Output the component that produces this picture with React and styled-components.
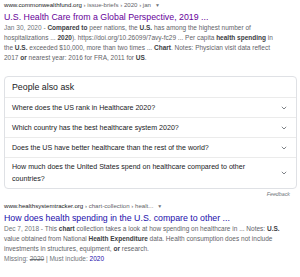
import React from 'react';
import styled, { createGlobalStyle } from 'styled-components';

// Estilo global da página
const GlobalStyle = createGlobalStyle`
    body {
        margin: 0;
        background: #ffffff;
        font-family: 'Liberation Sans', Arial, sans-serif;
    }
`;

const Page = styled.div`
    display: flex;
    flex-direction: column;
    width: 300px;
    padding: 0 3px 0 4px;
    box-sizing: border-box;
`;

const Result = styled.div`
    display: flex;
    flex-direction: column;
    margin-top: ${(props) => props.$top || 0}px;
`;

const Cite = styled.div`
    font-size: 6.1px;
    line-height: 9px;
    color: #202124;
    white-space: nowrap;
`;

const Crumbs = styled.span`
    color: #5f6368;
`;

const Caret = styled.span`
    display: inline-block;
    margin-left: 4px;
    font-size: 5px;
    color: #70757a;
`;

const Title = styled.a`
    margin-top: 1px;
    font-size: 8.8px;
    line-height: 12px;
    color: ${(props) => (props.$visited ? '#660099' : '#1a0dab')};
    text-decoration: none;
    white-space: nowrap;
`;

const Snippet = styled.div`
    display: flex;
    flex-direction: column;
    font-size: 6.5px;
    color: #5f6368;

    b {
        color: #3c4043;
    }
`;

// Uma linha do resumo, com as quebras da captura
const Line = styled.div`
    height: 10px;
    line-height: 10px;
    white-space: nowrap;
`;

const Date = styled.span`
    color: #70757a;
`;

const Struck = styled.s`
    color: #70757a;
`;

const Link = styled.span`
    color: #1a0dab;
`;

// Caixa "People also ask"
const PaaBox = styled.div`
    display: flex;
    flex-direction: column;
    margin-top: 13px;
    border: 1px solid #dfe1e5;
    border-radius: 4px;
`;

const PaaHeader = styled.div`
    height: 20px;
    padding-left: 7px;
    display: flex;
    align-items: center;
    font-size: 8.8px;
    color: #202124;
`;

const PaaRow = styled.div`
    display: flex;
    align-items: center;
    justify-content: space-between;
    min-height: 19px;
    padding: 0 9px 0 7px;
    border-top: 1px solid #ebebeb;
`;

const Question = styled.div`
    flex: 1;
    padding: ${(props) => (props.$wrap ? '3px 22px 3px 0' : '0 22px 0 0')};
    font-size: 7.1px;
    line-height: 12px;
    color: #202124;
`;

const Chevron = () => (
    <svg width="6" height="4" viewBox="0 0 6 4">
        <path d="M0.8 0.8 L3 3 L5.2 0.8" fill="none" stroke="#70757a" strokeWidth="0.9" />
    </svg>
);

const Feedback = styled.div`
    align-self: flex-end;
    margin-right: 7px;
    font-size: 5.3px;
    line-height: 10px;
    font-style: italic;
    color: #70757a;
`;

const questions = [
    'Where does the US rank in Healthcare 2020?',
    'Which country has the best healthcare system 2020?',
    'Does the US have better healthcare than the rest of the world?',
];

const App = () => {
    return (
        <Page>
            <GlobalStyle />
            <Result>
                <Cite>
                    www.commonwealthfund.org<Crumbs> › issue-briefs › 2020 › jan</Crumbs>
                    <Caret>▼</Caret>
                </Cite>
                <Title $visited href="#">U.S. Health Care from a Global Perspective, 2019 ...</Title>
                <Snippet>
                    <Line>
                        <Date>Jan 30, 2020 - </Date>
                        <b>Compared to</b> peer nations, the <b>U.S.</b> has among the highest number of
                    </Line>
                    <Line>
                        hospitalizations ... <b>2020</b>). https://doi.org/10.26099/7avy-fc29 ... Per capita{' '}
                        <b>health spending</b> in
                    </Line>
                    <Line>
                        the <b>U.S.</b> exceeded $10,000, more than two times ... <b>Chart</b>. Notes: Physician
                        visit data reflect
                    </Line>
                    <Line>
                        2017 <b>or</b> nearest year: 2016 for FRA, 2011 for <b>US</b>.
                    </Line>
                </Snippet>
            </Result>

            <PaaBox>
                <PaaHeader>People also ask</PaaHeader>
                {questions.map((q) => (
                    <PaaRow key={q}>
                        <Question>{q}</Question>
                        <Chevron />
                    </PaaRow>
                ))}
                <PaaRow>
                    <Question $wrap>
                        How much does the United States spend on healthcare compared to other countries?
                    </Question>
                    <Chevron />
                </PaaRow>
            </PaaBox>
            <Feedback>Feedback</Feedback>

            <Result $top={2}>
                <Cite>
                    www.healthsystemtracker.org<Crumbs> › chart-collection › healt...</Crumbs>
                    <Caret>▼</Caret>
                </Cite>
                <Title href="#">How does health spending in the U.S. compare to other ...</Title>
                <Snippet>
                    <Line>
                        <Date>Dec 7, 2018 - </Date>
                        This <b>chart</b> collection takes a look at how spending on healthcare in ... Notes:{' '}
                        <b>U.S.</b>
                    </Line>
                    <Line>
                        value obtained from National <b>Health Expenditure</b> data. Health consumption does not
                        include
                    </Line>
                    <Line>
                        investments in structures, equipment, <b>or</b> research.
                    </Line>
                    <Line>
                        <Date>Missing: </Date>
                        <Struck>2020</Struck>
                        <Date> | Must include: </Date>
                        <Link>2020</Link>
                    </Line>
                </Snippet>
            </Result>
        </Page>
    );
};

export default App;
